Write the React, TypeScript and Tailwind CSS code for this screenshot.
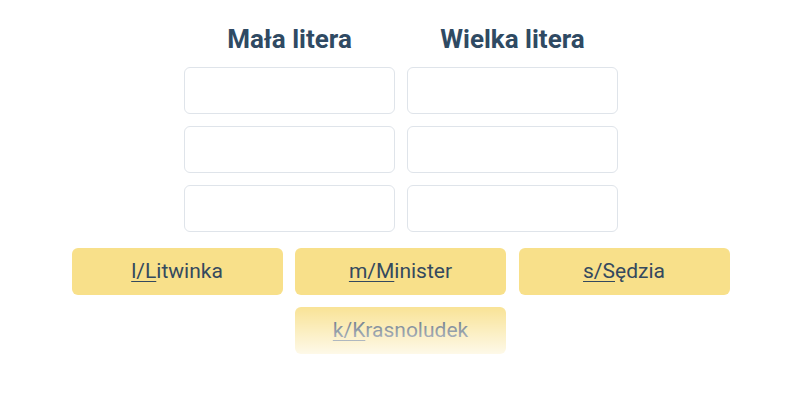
import React from "react";

const Btn = ({ k, rest }: { k: string; rest: string }) => (
  <div className="h-[47px] w-[211px] rounded-[6px] bg-[#f8e08a] flex items-center justify-center text-[21px] text-[#34495e]">
    <span className="underline underline-offset-[3px] decoration-1">{k}</span>
    <span>{rest}</span>
  </div>
);

export default function App() {
  return (
    <div className="w-[800px] h-[400px] bg-white relative" style={{ fontFamily: "Roboto, 'Noto Sans', sans-serif" }}>
      <div className="pt-[23px] flex flex-col items-center">
        <div className="pl-[2px] grid grid-cols-[211px_211px] gap-x-[12px] gap-y-[12px]">
          <div className="text-center text-[26px] font-bold text-[#2f4a63] leading-[32px]">Mała litera</div>
          <div className="text-center text-[26px] font-bold text-[#2f4a63] leading-[32px]">Wielka litera</div>
          {Array.from({ length: 6 }).map((_, i) => (
            <div key={i} className="h-[47px] rounded-[6px] border border-[#dfe4ea] bg-white" />
          ))}
        </div>
        <div className="mt-[16px] grid grid-cols-[211px_211px_211px] gap-x-[12.5px] gap-y-[12px] pl-[1px]">
          <Btn k="l/L" rest="itwinka" />
          <Btn k="m/M" rest="inister" />
          <Btn k="s/S" rest="ędzia" />
          <div />
          <Btn k="k/K" rest="rasnoludek" />
        </div>
      </div>
      <div className="absolute left-0 right-0 top-[300px] h-[60px] bg-gradient-to-b from-white/0 to-white/90 pointer-events-none" />
    </div>
  );
}
